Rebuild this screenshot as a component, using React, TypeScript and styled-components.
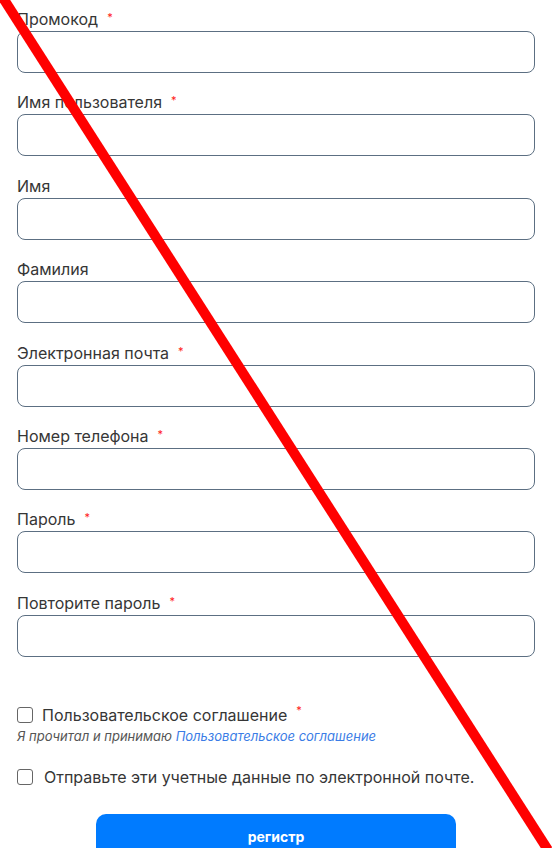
import React from 'react';
import styled, { createGlobalStyle } from 'styled-components';

const GlobalStyle = createGlobalStyle`
  html, body {
    margin: 0;
    padding: 0;
    background: #ffffff;
  }
  body {
    font-family: Inter, "Noto Sans", sans-serif;
    color: #363636;
  }
`;

const Page = styled.div`
  position: relative;
  width: 552px;
  height: 848px;
  overflow: hidden;
`;

const Form = styled.form`
  display: flex;
  flex-direction: column;
  padding: 9px 17px 0 17px;
`;

const Field = styled.div`
  display: flex;
  flex-direction: column;
  margin-bottom: 19.4px;
`;

const Label = styled.label`
  height: 20px;
  line-height: 20px;
  font-size: 16px;
  color: #363636;
  margin-bottom: 2px;
`;

const Required = styled.span`
  color: #ff1a1a;
  font-size: 11px;
  margin-left: 9px;
  vertical-align: top;
  position: relative;
  top: -2px;
`;

const Input = styled.input`
  box-sizing: border-box;
  width: 100%;
  height: 42px;
  border: 1px solid #5c6f82;
  border-radius: 8px;
  padding: 0 12px;
  font-size: 15px;
  font-family: inherit;
  outline: none;
  background: #ffffff;
`;

const Agreement = styled.div`
  display: flex;
  flex-direction: column;
  margin-top: 29px;
`;

const CheckRow = styled.label<{ $gap: number }>`
  display: flex;
  align-items: center;
  gap: ${({ $gap }) => $gap}px;
  height: 20px;
  font-size: 16px;
  color: #363636;
`;

const Box = styled.span`
  box-sizing: border-box;
  width: 16px;
  height: 16px;
  border: 1.5px solid #666666;
  border-radius: 3px;
  flex-shrink: 0;
`;

const Note = styled.div`
  font-size: 13px;
  font-style: italic;
  color: #555555;
  line-height: 20px;
  margin-top: 1px;
`;

const NoteLink = styled.a`
  color: #3b7de6;
  text-decoration: none;
`;

const SecondCheck = styled.div`
  margin-top: 21px;
`;

const Submit = styled.button`
  align-self: center;
  width: 360px;
  height: 44px;
  margin-top: 27px;
  border: none;
  border-radius: 10px;
  background: #007bff;
  color: #ffffff;
  font-family: inherit;
  font-size: 14px;
  font-weight: 700;
`;

const Strike = styled.svg`
  position: absolute;
  left: 0;
  top: 0;
  pointer-events: none;
`;

const fields = [
  { label: 'Промокод', required: true },
  { label: 'Имя пользователя', required: true },
  { label: 'Имя', required: false },
  { label: 'Фамилия', required: false },
  { label: 'Электронная почта', required: true },
  { label: 'Номер телефона', required: true },
  { label: 'Пароль', required: true, type: 'password' },
  { label: 'Повторите пароль', required: true, type: 'password' },
];

const App: React.FC = () => {
  return (
    <Page>
      <GlobalStyle />
      <Form onSubmit={(e) => e.preventDefault()}>
        {fields.map((f) => (
          <Field key={f.label}>
            <Label>
              {f.label}
              {f.required && <Required>*</Required>}
            </Label>
            <Input type={f.type || 'text'} />
          </Field>
        ))}
        <Agreement>
          <CheckRow $gap={9}>
            <Box />
            <span>
              Пользовательское соглашение
              <Required>*</Required>
            </span>
          </CheckRow>
          <Note>
            Я прочитал и принимаю <NoteLink href="#">Пользовательское соглашение</NoteLink>
          </Note>
          <SecondCheck>
            <CheckRow $gap={11}>
              <Box />
              <span>Отправьте эти учетные данные по электронной почте.</span>
            </CheckRow>
          </SecondCheck>
        </Agreement>
        <Submit type="submit">регистр</Submit>
      </Form>
      <Strike width="552" height="848" viewBox="0 0 552 848">
        <line x1="3" y1="-2" x2="548" y2="850" stroke="#ff0000" strokeWidth="10" />
      </Strike>
    </Page>
  );
};

export default App;
